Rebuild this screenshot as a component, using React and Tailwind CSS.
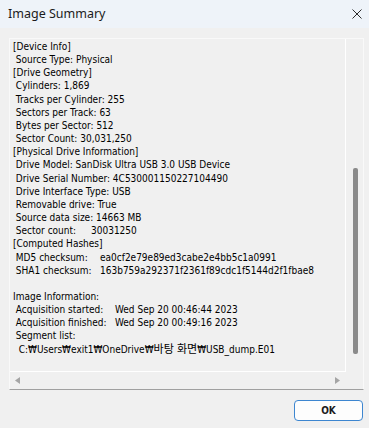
import React from "react";

const F = { fontFamily: '"DejaVu Sans Condensed", "Noto Sans CJK KR", sans-serif' };

const lines = [
  { t: "[Device Info]" },
  { t: " Source Type: Physical" },
  { t: "[Drive Geometry]" },
  { t: " Cylinders: 1,869" },
  { t: " Tracks per Cylinder: 255" },
  { t: " Sectors per Track: 63" },
  { t: " Bytes per Sector: 512" },
  { t: " Sector Count: 30,031,250" },
  { t: "[Physical Drive Information]" },
  { t: " Drive Model: SanDisk Ultra USB 3.0 USB Device" },
  { t: " Drive Serial Number: 4C530001150227104490" },
  { t: " Drive Interface Type: USB" },
  { t: " Removable drive: True" },
  { t: " Source data size: 14663 MB" },
  { t: " Sector count:", v: "30031250", w: "w-[78px]" },
  { t: "[Computed Hashes]" },
  { t: " MD5 checksum:", v: "ea0cf2e79e89ed3cabe2e4bb5c1a0991", w: "w-[87px]" },
  { t: " SHA1 checksum:", v: "163b759a292371f2361f89cdc1f5144d2f1fbae8", w: "w-[87px]" },
  { t: "" },
  { t: "Image Information:" },
  { t: " Acquisition started:", v: "Wed Sep 20 00:46:44 2023", w: "w-[102px]" },
  { t: " Acquisition finished:", v: "Wed Sep 20 00:49:16 2023", w: "w-[102px]" },
  { t: " Segment list:" },
  { path: true },
];

export default function App() {
  return (
    <div className="w-[369px] h-[428px] bg-[#f0f0f0] flex flex-col overflow-hidden" style={F}>
      <div className="h-[28px] bg-[#eef3f9] flex items-center justify-between pl-[8px] pr-[7px] shrink-0">
        <span className="text-[12.5px] text-[#1b1b1b]" style={{ fontFamily: '"Noto Sans", sans-serif' }}>
          Image Summary
        </span>
        <svg width="10" height="10" viewBox="0 0 10 10" className="mt-[-1px]">
          <path d="M0.5 0.5 L9.5 9.5 M9.5 0.5 L0.5 9.5" stroke="#2b2b2b" strokeWidth="1" fill="none" />
        </svg>
      </div>
      <div className="pt-[10px] pl-[9px]">
        <div className="w-[355px] h-[352px] border border-[#f9f9f9] border-b-[#a0a0a0] grid grid-cols-[1fr_17px] grid-rows-[1fr_17px]">
          <div className="border-r border-b border-white pl-[3px] pt-[1px] text-[10px] leading-[13.17px] text-black overflow-hidden">
            {lines.map((l, i) => (
              <div key={i} className="whitespace-pre h-[13.17px]">
                {l.path ? (
                  <>
                    {"  C:₩Users₩exit1₩OneDrive₩"}
                    <span className="text-[11px]">바탕 화면</span>
                    {"₩USB_dump.E01"}
                  </>
                ) : l.v ? (
                  <>
                    <span className={"inline-block " + l.w}>{l.t}</span>
                    {l.v}
                  </>
                ) : (
                  l.t || "\u00a0"
                )}
              </div>
            ))}
          </div>
          <div className="flex justify-center pt-[129px] pb-[18px] pl-[1px]">
            <div className="w-[5px] h-full bg-[#8a8a8a] rounded-[2px]" />
          </div>
          <div className="flex items-center justify-between pl-[5px] pr-[6px]">
            <svg width="5" height="7" viewBox="0 0 5 7">
              <path d="M5 0 L0 3.5 L5 7 Z" fill="#a5a5a5" />
            </svg>
            <svg width="5" height="7" viewBox="0 0 5 7">
              <path d="M0 0 L5 3.5 L0 7 Z" fill="#a5a5a5" />
            </svg>
          </div>
          <div />
        </div>
      </div>
      <div className="flex justify-end pr-[6px] pt-[10px]">
        <button className="w-[69px] h-[21px] rounded-[4px] border border-[#3d86d0] bg-[#fdfdfd] text-[10px] font-bold text-[#1b1b1b] flex items-center justify-center">
          OK
        </button>
      </div>
    </div>
  );
}
